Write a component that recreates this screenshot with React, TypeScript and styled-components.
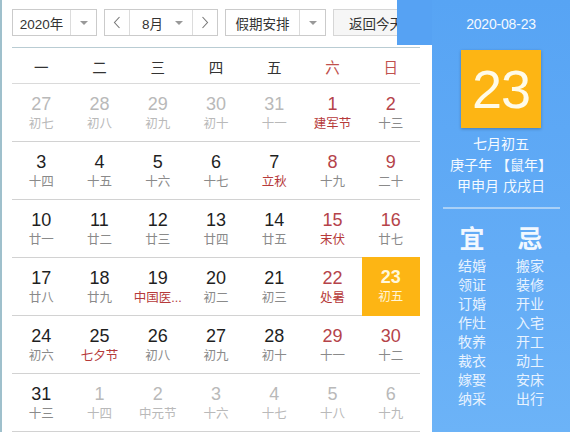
import React from 'react';
import styled, { createGlobalStyle } from 'styled-components';

const GlobalStyle = createGlobalStyle`
	html, body {
		margin: 0;
		padding: 0;
		background: #ffffff;
	}
	body {
		width: 570px;
		height: 432px;
		overflow: hidden;
		font-family: 'Liberation Sans', 'Noto Sans CJK SC', sans-serif;
	}
`;

type Day = {
	n: number;
	l: string;
	other?: boolean;
	fest?: boolean;
	today?: boolean;
};

const weeks: Day[][] = [
	[
		{ n: 27, l: '初七', other: true },
		{ n: 28, l: '初八', other: true },
		{ n: 29, l: '初九', other: true },
		{ n: 30, l: '初十', other: true },
		{ n: 31, l: '十一', other: true },
		{ n: 1, l: '建军节', fest: true },
		{ n: 2, l: '十三' },
	],
	[
		{ n: 3, l: '十四' },
		{ n: 4, l: '十五' },
		{ n: 5, l: '十六' },
		{ n: 6, l: '十七' },
		{ n: 7, l: '立秋', fest: true },
		{ n: 8, l: '十九' },
		{ n: 9, l: '二十' },
	],
	[
		{ n: 10, l: '廿一' },
		{ n: 11, l: '廿二' },
		{ n: 12, l: '廿三' },
		{ n: 13, l: '廿四' },
		{ n: 14, l: '廿五' },
		{ n: 15, l: '末伏', fest: true },
		{ n: 16, l: '廿七' },
	],
	[
		{ n: 17, l: '廿八' },
		{ n: 18, l: '廿九' },
		{ n: 19, l: '中国医...', fest: true },
		{ n: 20, l: '初二' },
		{ n: 21, l: '初三' },
		{ n: 22, l: '处暑', fest: true },
		{ n: 23, l: '初五', today: true },
	],
	[
		{ n: 24, l: '初六' },
		{ n: 25, l: '七夕节', fest: true },
		{ n: 26, l: '初八' },
		{ n: 27, l: '初九' },
		{ n: 28, l: '初十' },
		{ n: 29, l: '十一' },
		{ n: 30, l: '十二' },
	],
	[
		{ n: 31, l: '十三' },
		{ n: 1, l: '十四', other: true },
		{ n: 2, l: '中元节', other: true },
		{ n: 3, l: '十六', other: true },
		{ n: 4, l: '十七', other: true },
		{ n: 5, l: '十八', other: true },
		{ n: 6, l: '十九', other: true },
	],
];

const weekdays = ['一', '二', '三', '四', '五', '六', '日'];

const yi = ['结婚', '领证', '订婚', '作灶', '牧养', '裁衣', '嫁娶', '纳采'];
const ji = ['搬家', '装修', '开业', '入宅', '开工', '动土', '安床', '出行'];

const Chevron = ({ dir }: { dir: 'left' | 'right' }) => (
	<svg width='8' height='13' viewBox='0 0 8 13'>
		<path
			d={dir === 'left' ? 'M6.5 1 L1.5 6.5 L6.5 12' : 'M1.5 1 L6.5 6.5 L1.5 12'}
			fill='none'
			stroke='#777'
			strokeWidth='1.1'
		/>
	</svg>
);

const App = () => {
	return (
		<Page>
			<GlobalStyle />
			<Main>
				<Toolbar>
					<SelectBox w={85}>
						<SelectLabel>2020年</SelectLabel>
						<CaretCell>
							<Caret />
						</CaretCell>
					</SelectBox>
					<SelectBox w={114}>
						<ArrowCell side='left'>
							<Chevron dir='left' />
						</ArrowCell>
						<MonthLabel>
							<span>8月</span>
							<Caret />
						</MonthLabel>
						<ArrowCell side='right'>
							<Chevron dir='right' />
						</ArrowCell>
					</SelectBox>
					<SelectBox w={101}>
						<SelectLabel>假期安排</SelectLabel>
						<CaretCell>
							<Caret />
						</CaretCell>
					</SelectBox>
					<TodayButton>返回今天</TodayButton>
				</Toolbar>

				<WeekHeader>
					{weekdays.map((w, i) => (
						<WeekName key={w} weekend={i >= 5}>
							{w}
						</WeekName>
					))}
				</WeekHeader>

				{weeks.map((week, r) => (
					<WeekRow key={r}>
						{week.map((d, c) => (
							<DayCell key={c} today={d.today}>
								<DayNum other={d.other} weekend={c >= 5} today={d.today}>
									{d.n}
								</DayNum>
								<Lunar other={d.other} fest={d.fest} today={d.today}>
									{d.l}
								</Lunar>
							</DayCell>
						))}
					</WeekRow>
				))}
			</Main>

			<Side>
				<SideDate>2020-08-23</SideDate>
				<BigDay>23</BigDay>
				<LunarInfo>
					<div>七月初五</div>
					<div>庚子年 【鼠年】</div>
					<div>甲申月 戊戌日</div>
				</LunarInfo>
				<Divider />
				<Almanac>
					<AlmanacCol>
						<AlmanacHead>宜</AlmanacHead>
						{yi.map((t) => (
							<AlmanacItem key={t}>{t}</AlmanacItem>
						))}
					</AlmanacCol>
					<AlmanacCol>
						<AlmanacHead>忌</AlmanacHead>
						{ji.map((t) => (
							<AlmanacItem key={t}>{t}</AlmanacItem>
						))}
					</AlmanacCol>
				</Almanac>
			</Side>
		</Page>
	);
};

const Page = styled.div`
	display: flex;
	width: 570px;
	height: 432px;
	border-left: 2px solid #9fc0cc;
	box-sizing: border-box;
	overflow: hidden;
	position: relative;
`;

const Main = styled.div`
	width: 408px;
	margin-left: 10px;
	margin-right: 12px;
	flex: none;
`;

const Toolbar = styled.div`
	height: 48px;
	box-sizing: border-box;
	padding-top: 9px;
	display: flex;
	gap: 7px;
	border-bottom: 1px solid #b9ccd3;
	white-space: nowrap;
`;

const SelectBox = styled.div<{ w: number }>`
	width: ${({ w }) => w}px;
	height: 27px;
	box-sizing: border-box;
	border: 1px solid #cbcbcb;
	display: flex;
	background: #fff;
	flex: none;
`;

const SelectLabel = styled.div`
	flex: 1;
	display: flex;
	align-items: center;
	justify-content: center;
	font-size: 13.5px;
	color: #333;
`;

const CaretCell = styled.div`
	width: 25px;
	border-left: 1px solid #dcdcdc;
	display: flex;
	align-items: center;
	justify-content: center;
`;

const Caret = styled.i`
	width: 0;
	height: 0;
	border-left: 4px solid transparent;
	border-right: 4px solid transparent;
	border-top: 4px solid #999;
`;

const ArrowCell = styled.div<{ side: 'left' | 'right' }>`
	width: 24px;
	display: flex;
	align-items: center;
	justify-content: center;
	${({ side }) => (side === 'left' ? 'border-right: 1px solid #dcdcdc;' : 'border-left: 1px solid #dcdcdc;')}
`;

const MonthLabel = styled.div`
	flex: 1;
	display: flex;
	align-items: center;
	justify-content: space-between;
	padding: 0 9px 0 12px;
	font-size: 13.5px;
	color: #333;
`;

const TodayButton = styled.div`
	width: 70px;
	height: 27px;
	box-sizing: border-box;
	border: 1px solid #d6d6d6;
	background: #f6f6f6;
	flex: none;
	display: flex;
	align-items: center;
	padding-left: 15px;
	font-size: 13.5px;
	color: #333;
`;

const WeekHeader = styled.div`
	height: 36px;
	box-sizing: border-box;
	display: grid;
	grid-template-columns: repeat(7, 1fr);
	align-items: center;
	border-bottom: 1px solid #dadada;
	padding-top: 2px;
`;

const WeekName = styled.div<{ weekend: boolean }>`
	text-align: center;
	font-size: 14.5px;
	color: ${({ weekend }) => (weekend ? '#c0504d' : '#333')};
`;

const WeekRow = styled.div`
	height: 58px;
	box-sizing: border-box;
	display: grid;
	grid-template-columns: repeat(7, 1fr);
	border-bottom: 1px solid #d2d2d2;
`;

const DayCell = styled.div<{ today?: boolean }>`
	display: flex;
	flex-direction: column;
	align-items: center;
	padding-top: 9px;
	margin-top: ${({ today }) => (today ? '-1px' : '0')};
	margin-bottom: ${({ today }) => (today ? '-1px' : '0')};
	background: ${({ today }) => (today ? '#fdb514' : 'transparent')};
`;

const DayNum = styled.div<{ other?: boolean; weekend: boolean; today?: boolean }>`
	font-size: 18px;
	line-height: 22px;
	color: ${({ other, weekend, today }) =>
		today ? '#fff8dc' : other ? '#b9b9b9' : weekend ? '#b5434a' : '#1f1f1f'};
	font-weight: ${({ today }) => (today ? 700 : 400)};
`;

const Lunar = styled.div<{ other?: boolean; fest?: boolean; today?: boolean }>`
	font-size: 12.5px;
	line-height: 18px;
	white-space: nowrap;
	color: ${({ other, fest, today }) =>
		today ? '#fff6d8' : other ? '#b9b9b9' : fest ? '#b63a3a' : '#8a8a8a'};
`;

const Side = styled.div`
	flex: 1;
	position: relative;
	background: linear-gradient(180deg, #57a4f4 0%, #63acf6 60%, #6cb3f7 100%);
	display: flex;
	flex-direction: column;
	align-items: center;
	padding-top: 16px;
	color: #fff;

	&::before {
		content: '';
		position: absolute;
		top: 0;
		left: -35px;
		width: 35px;
		height: 45px;
		background: #56a2f3;
	}
`;

const SideDate = styled.div`
	font-size: 14px;
	line-height: 16px;
	letter-spacing: -0.2px;
	color: #f4f9ff;
`;

const BigDay = styled.div`
	margin-top: 18px;
	width: 80px;
	height: 78px;
	background: #fdb514;
	box-shadow: 0 1px 3px rgba(0, 0, 0, 0.25);
	display: flex;
	align-items: center;
	justify-content: center;
	font-size: 54px;
	color: #fffbe8;
	letter-spacing: -1px;
`;

const LunarInfo = styled.div`
	margin-top: 6px;
	font-size: 14px;
	line-height: 21px;
	text-align: center;
	color: #f5faff;
	white-space: nowrap;
`;

const Divider = styled.div`
	margin-top: 10px;
	width: 117px;
	height: 2px;
	background: #a9d0f7;
`;

const Almanac = styled.div`
	margin-top: 15px;
	display: grid;
	grid-template-columns: 50px 50px;
	gap: 8px;
`;

const AlmanacCol = styled.div`
	display: flex;
	flex-direction: column;
	align-items: center;
`;

const AlmanacHead = styled.div`
	font-size: 25px;
	line-height: 30px;
	font-weight: 700;
	color: #f2f8ff;
	margin-bottom: 3px;
`;

const AlmanacItem = styled.div`
	font-size: 14px;
	line-height: 19px;
	color: #e8f3ff;
`;

export default App;
